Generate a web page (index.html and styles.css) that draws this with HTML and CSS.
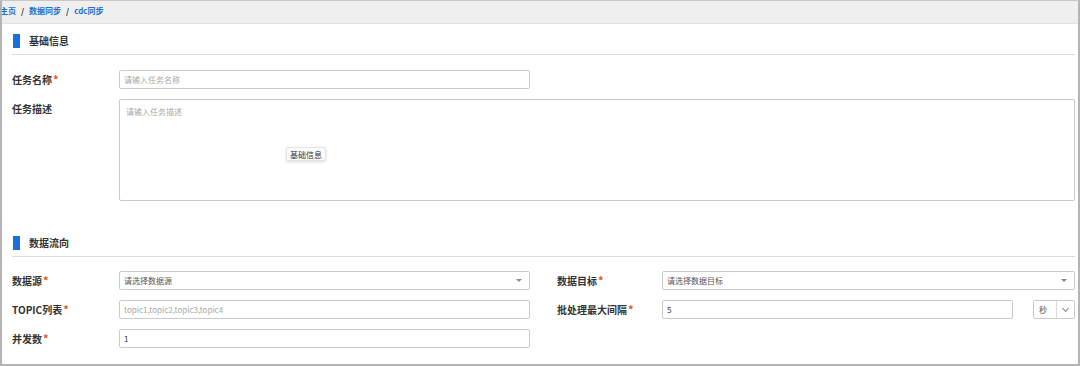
FILE: index.html
```html
<!DOCTYPE html>
<html lang="zh-CN">
<head>
    <meta charset="UTF-8">
    <meta name="viewport" content="width=device-width, initial-scale=1.0">
    <title>cdc同步</title>
    <link rel="stylesheet" href="styles.css">
</head>
<body>
    <div class="frame">
        <div class="crumbs">
            <a href="#">主页</a><span class="sep">/</span><a href="#">数据同步</a><span class="sep">/</span><a href="#">cdc同步</a>
        </div>

        <div class="content">
            <div class="section-title"><i class="mark"></i>基础信息</div>
            <div class="form-grid">
                <label class="lbl">任务名称<em>*</em></label>
                <input class="field" type="text" placeholder="请输入任务名称">
                <div></div><div></div>

                <label class="lbl lbl-top">任务描述</label>
                <div class="area-wrap">
                    <textarea class="area" placeholder="请输入任务描述"></textarea>
                    <div class="tip">基础信息</div>
                </div>
            </div>

            <div class="section-title second"><i class="mark"></i>数据流向</div>
            <div class="form-grid">
                <label class="lbl">数据源<em>*</em></label>
                <div class="field select">请选择数据源<span class="caret"></span></div>
                <label class="lbl right">数据目标<em>*</em></label>
                <div class="field select">请选择数据目标<span class="caret"></span></div>

                <label class="lbl">TOPIC列表<em>*</em></label>
                <input class="field" type="text" placeholder="topic1,topic2,topic3,topic4">
                <label class="lbl right">批处理最大间隔<em>*</em></label>
                <div class="with-unit">
                    <input class="field" type="text" value="5">
                    <div class="unit"><span>秒</span><span class="chev"></span></div>
                </div>

                <label class="lbl">并发数<em>*</em></label>
                <input class="field" type="text" value="1">
            </div>
        </div>
    </div>
</body>
</html>
```

FILE: styles.css
```css
* {
    box-sizing: border-box;
}
body {
    margin: 0;
    font-family: "Noto Sans CJK SC", "Noto Sans", sans-serif;
    color: #333;
    background: #fff;
}
.frame {
    width: 1080px;
    height: 366px;
    border: 2px solid #b4b4b4;
    border-top: 1px solid #c8c8c8;
    overflow: hidden;
}
.crumbs {
    height: 23px;
    background: #efefef;
    border-bottom: 1px solid #e2e2e2;
    font-size: 8px;
    font-weight: bold;
    line-height: 19px;
    margin-left: -2px;
}
.crumbs a {
    color: #2470cf;
    text-decoration: none;
}
.crumbs .sep {
    color: #333;
    margin: 0 5px;
}
.content {
    padding: 0 3px 0 10px;
}
.section-title {
    display: flex;
    align-items: center;
    margin-top: 10px;
    padding-bottom: 6px;
    border-bottom: 1px solid #dcdcdc;
    font-size: 10px;
    font-weight: bold;
    line-height: 14px;
    margin-bottom: 15px;
}
.section-title.second {
    margin-top: 35px;
    margin-bottom: 14px;
}
.mark {
    width: 7px;
    height: 14px;
    background: #1a6fe0;
    margin-left: 1px;
    margin-right: 9px;
}
.form-grid {
    display: grid;
    grid-template-columns: 107px 411px 132px 1fr;
    row-gap: 10px;
}
.lbl {
    height: 19px;
    line-height: 19px;
    font-size: 10px;
    font-weight: bold;
    color: #333;
    white-space: nowrap;
}
.lbl em {
    font-style: normal;
    color: #e8531f;
    margin-left: 1px;
    font-size: 11px;
}
.lbl.right {
    padding-left: 27px;
}
.field {
    height: 19px;
    width: 100%;
    border: 1px solid #cacaca;
    border-radius: 2px;
    padding: 0 4px;
    font-family: inherit;
    font-size: 8px;
    color: #333;
    background: #fff;
    outline: none;
}
.field::placeholder,
.area::placeholder {
    color: #a8a8a8;
}
.select {
    display: flex;
    align-items: center;
    justify-content: space-between;
    color: #555;
}
.caret {
    width: 0;
    height: 0;
    border-left: 3px solid transparent;
    border-right: 3px solid transparent;
    border-top: 3px solid #8a8a8a;
    margin-right: 3px;
}
.area-wrap {
    grid-column: 2 / -1;
    position: relative;
    height: 102px;
}
.area {
    width: 100%;
    height: 100%;
    border: 1px solid #cacaca;
    border-radius: 2px;
    padding: 6px 6px;
    font-family: inherit;
    font-size: 8px;
    resize: none;
    outline: none;
}
.tip {
    position: absolute;
    left: 167px;
    top: 48px;
    padding: 0 3px;
    height: 14px;
    line-height: 13px;
    font-size: 8px;
    color: #333;
    background: #fbfbfb;
    border: 1px solid #e4e4e4;
    border-radius: 2px;
    box-shadow: 0 1px 3px rgba(0, 0, 0, 0.15);
}
.with-unit {
    display: flex;
    gap: 20px;
}
.unit {
    flex: 0 0 42px;
    height: 19px;
    display: flex;
    border: 1px solid #cacaca;
    border-radius: 2px;
    font-size: 8px;
    color: #555;
}
.unit span:first-child {
    flex: 1;
    line-height: 17px;
    padding-left: 5px;
    border-right: 1px solid #dcdcdc;
}
.chev {
    width: 17px;
    position: relative;
}
.chev::after {
    content: "";
    position: absolute;
    left: 6px;
    top: 5px;
    width: 4px;
    height: 4px;
    border-right: 1px solid #888;
    border-bottom: 1px solid #888;
    transform: rotate(45deg);
}
```
